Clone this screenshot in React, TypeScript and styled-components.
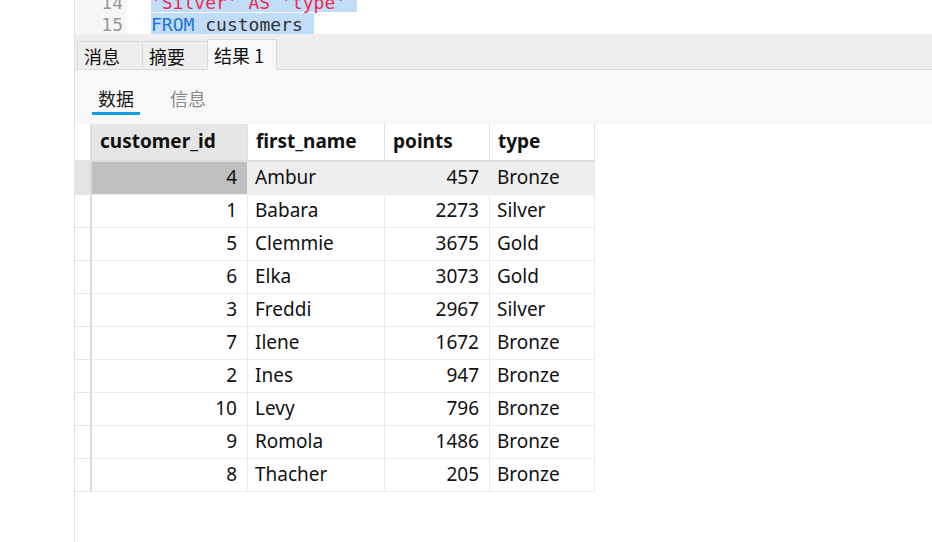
import React from "react";
import styled, { createGlobalStyle } from "styled-components";

const Global = createGlobalStyle`
  html, body { margin: 0; padding: 0; width: 932px; height: 542px; overflow: hidden; background: #ffffff; }
  * { box-sizing: border-box; }
`;

const Page = styled.div`
  display: flex;
  width: 932px;
  height: 542px;
  background: #ffffff;
  font-family: "Noto Sans", "Noto Sans CJK SC", sans-serif;
`;

const Blank = styled.div`
  width: 74px;
  flex: none;
  background: #ffffff;
`;

const Pane = styled.div`
  flex: 1;
  display: flex;
  flex-direction: column;
  border-left: 1px solid #e2e2e2;
  min-width: 0;
`;

const Editor = styled.div`
  height: 34px;
  flex: none;
  display: flex;
  overflow: hidden;
  font-family: "DejaVu Sans Mono", monospace;
  font-size: 18px;
`;

const Gutter = styled.div`
  width: 52px;
  flex: none;
  background: #f6f6f6;
  display: flex;
  flex-direction: column;
  justify-content: flex-end;
  align-items: flex-end;
  padding-right: 4px;
  color: #999999;
`;

const LineNo = styled.div`
  flex: none;
  height: 22px;
  line-height: 25.5px;
`;

const Code = styled.div`
  flex: 1;
  display: flex;
  flex-direction: column;
  justify-content: flex-end;
  padding-left: 24px;
`;

const CodeLine = styled.div`
  flex: none;
  height: 22px;
  display: flex;
  align-items: flex-end;
  white-space: pre;
`;

const Sel = styled.span`
  display: block;
  height: 21px;
  line-height: 23.5px;
  background: #c0dcf6;
`;

const Tok = styled.span<{ $kind: "kw" | "str" | "id" }>`
  color: ${(p) => (p.$kind === "kw" ? "#1c74dc" : p.$kind === "str" ? "#ee2a4f" : "#333333")};
`;

const TabBar = styled.div`
  height: 36px;
  flex: none;
  display: flex;
  align-items: flex-end;
  padding-left: 2px;
  background: #eeeeee;
  border-bottom: 1px solid #dadada;
`;

const Tab = styled.div<{ $active?: boolean; $w: number }>`
  width: ${(p) => p.$w}px;
  height: ${(p) => (p.$active ? 31 : 28)}px;
  margin-bottom: ${(p) => (p.$active ? -1 : 0)}px;
  padding-left: 6px;
  display: flex;
  align-items: center;
  font-family: "Noto Sans CJK SC", sans-serif;
  font-size: 18px;
  color: #111111;
  background: ${(p) => (p.$active ? "#f8f8f8" : "#eeeeee")};
  border-top: 1px solid #dadada;
  border-left: 1px solid #dadada;
  border-right: ${(p) => (p.$active ? "1px solid #dadada" : "none")};
  padding-top: ${(p) => (p.$active ? 0 : 1)}px;
`;

const SubTabs = styled.div`
  height: 54px;
  flex: none;
  display: flex;
  gap: 24px;
  padding: 14px 0 0 17px;
  background: #f8f8f8;
`;

const SubTab = styled.div<{ $active?: boolean }>`
  height: 31px;
  line-height: 28px;
  padding: 0 6px;
  font-family: "Noto Sans CJK SC", sans-serif;
  font-size: 18px;
  color: ${(p) => (p.$active ? "#1a1a1a" : "#8a8a8a")};
  border-bottom: 3px solid ${(p) => (p.$active ? "#119fe2" : "transparent")};
`;

const GridArea = styled.div`
  flex: 1;
  background: #ffffff;
`;

const Table = styled.div`
  display: grid;
  grid-template-columns: 17px 156px 137px 105px 105px;
  grid-auto-rows: 33px;
  grid-template-rows: 38px;
  width: max-content;
  font-size: 19px;
  color: #111111;
`;

const Corner = styled.div`
  background: #ffffff;
  border-right: 2px solid #dcdcdc;
  border-bottom: 2px solid #e4e4e4;
`;

const HeadCell = styled.div<{ $sorted?: boolean }>`
  display: flex;
  align-items: center;
  padding: 0 0 2px 8px;
  font-weight: 700;
  background: ${(p) => (p.$sorted ? "#e6e6e6" : "#ffffff")};
  border-right: 1px solid #e0e0e0;
  border-bottom: 2px solid #dedede;
`;

const RowHead = styled.div<{ $active?: boolean }>`
  background: ${(p) => (p.$active ? "#e3e3e3" : "#ffffff")};
  border-right: 2px solid #dadada;
  border-bottom: 1px solid #e6e6e6;
`;

const Cell = styled.div<{ $num?: boolean; $bg: string }>`
  display: flex;
  align-items: center;
  justify-content: ${(p) => (p.$num ? "flex-end" : "flex-start")};
  padding: ${(p) => (p.$num ? "0 10px 2px 0" : "0 0 2px 7px")};
  background: ${(p) => p.$bg};
  border-right: 1px solid #ebebeb;
  border-bottom: 1px solid #ebebeb;
`;

const rows: [number, string, number, string][] = [
  [4, "Ambur", 457, "Bronze"],
  [1, "Babara", 2273, "Silver"],
  [5, "Clemmie", 3675, "Gold"],
  [6, "Elka", 3073, "Gold"],
  [3, "Freddi", 2967, "Silver"],
  [7, "Ilene", 1672, "Bronze"],
  [2, "Ines", 947, "Bronze"],
  [10, "Levy", 796, "Bronze"],
  [9, "Romola", 1486, "Bronze"],
  [8, "Thacher", 205, "Bronze"],
];

export default function App() {
  return (
    <Page>
      <Global />
      <Blank />
      <Pane>
        <Editor>
          <Gutter>
            <LineNo>14</LineNo>
            <LineNo>15</LineNo>
          </Gutter>
          <Code>
            <CodeLine>
              <Sel>
                <Tok $kind="str">'Silver' AS 'type' </Tok>
              </Sel>
            </CodeLine>
            <CodeLine>
              <Sel>
                <Tok $kind="kw">FROM</Tok> <Tok $kind="id">customers </Tok>
              </Sel>
            </CodeLine>
          </Code>
        </Editor>
        <TabBar>
          <Tab $w={65}>消息</Tab>
          <Tab $w={65}>摘要</Tab>
          <Tab $w={70} $active>
            结果 1
          </Tab>
        </TabBar>
        <SubTabs>
          <SubTab $active>数据</SubTab>
          <SubTab>信息</SubTab>
        </SubTabs>
        <GridArea>
          <Table>
            <Corner />
            <HeadCell $sorted>customer_id</HeadCell>
            <HeadCell>first_name</HeadCell>
            <HeadCell>points</HeadCell>
            <HeadCell>type</HeadCell>
            {rows.map(([id, name, pts, type], i) => {
              const sel = i === 0;
              const bg = sel ? "#eeeeee" : "#ffffff";
              return (
                <React.Fragment key={id}>
                  <RowHead $active={sel} />
                  <Cell $num $bg={sel ? "#bfbfbf" : "#ffffff"}>
                    {id}
                  </Cell>
                  <Cell $bg={bg}>{name}</Cell>
                  <Cell $num $bg={bg}>
                    {pts}
                  </Cell>
                  <Cell $bg={bg}>{type}</Cell>
                </React.Fragment>
              );
            })}
          </Table>
        </GridArea>
      </Pane>
    </Page>
  );
}
